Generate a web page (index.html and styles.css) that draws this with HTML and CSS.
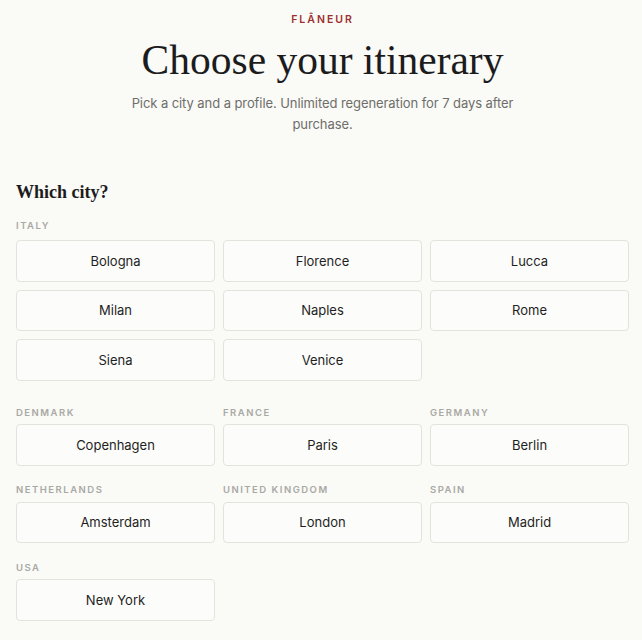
FILE: index.html
```html
<!DOCTYPE html>
<html lang="en">
<head>
<meta charset="utf-8">
<title>Flâneur — Choose your itinerary</title>
<link rel="stylesheet" href="styles.css">
</head>
<body>
<main class="page">
  <header class="hero">
    <div class="brand">FLÂNEUR</div>
    <h1 class="title">Choose your itinerary</h1>
    <p class="lede">Pick a city and a profile. Unlimited regeneration for 7 days after purchase.</p>
  </header>

  <section class="cities">
    <h2 class="section-title">Which city?</h2>

    <div class="country country-wide">
      <div class="country-label">ITALY</div>
      <div class="city-grid">
        <button class="city">Bologna</button>
        <button class="city">Florence</button>
        <button class="city">Lucca</button>
        <button class="city">Milan</button>
        <button class="city">Naples</button>
        <button class="city">Rome</button>
        <button class="city">Siena</button>
        <button class="city">Venice</button>
      </div>
    </div>

    <div class="country-grid">
      <div class="country">
        <div class="country-label">DENMARK</div>
        <button class="city">Copenhagen</button>
      </div>
      <div class="country">
        <div class="country-label">FRANCE</div>
        <button class="city">Paris</button>
      </div>
      <div class="country">
        <div class="country-label">GERMANY</div>
        <button class="city">Berlin</button>
      </div>
      <div class="country">
        <div class="country-label">NETHERLANDS</div>
        <button class="city">Amsterdam</button>
      </div>
      <div class="country">
        <div class="country-label">UNITED KINGDOM</div>
        <button class="city">London</button>
      </div>
      <div class="country">
        <div class="country-label">SPAIN</div>
        <button class="city">Madrid</button>
      </div>
      <div class="country">
        <div class="country-label">USA</div>
        <button class="city">New York</button>
      </div>
    </div>
  </section>
</main>
</body>
</html>
```

FILE: styles.css
```css
html, body {
  margin: 0;
  padding: 0;
  background: #fafaf7;
}

body {
  font-family: Inter, "Noto Sans", "Liberation Sans", sans-serif;
  color: #1f1f1f;
}

.page {
  padding: 13px 13px 20px 16px;
}

.hero {
  text-align: center;
}

.brand {
  font-size: 10.5px;
  font-weight: 600;
  letter-spacing: 2px;
  color: #9e2f2f;
  line-height: 14px;
}

.title {
  font-family: "Liberation Serif", "DejaVu Serif", serif;
  font-weight: 400;
  font-size: 41.5px;
  line-height: 48px;
  margin: 9px 0 0;
  color: #1c1c1c;
}

.lede {
  font-size: 13px;
  line-height: 21px;
  color: #6e6e6a;
  margin: 9px auto 0;
  max-width: 400px;
  letter-spacing: -0.08px;
}

.cities {
  margin-top: 45px;
}

.section-title {
  font-family: "Liberation Serif", "DejaVu Serif", serif;
  font-weight: 700;
  font-size: 18px;
  line-height: 24px;
  margin: 0 0 14px;
  color: #1c1c1c;
}

.country-label {
  font-size: 9.5px;
  font-weight: 600;
  letter-spacing: 1.5px;
  color: #a9a9a3;
  line-height: 14px;
  padding-top: 1px;
  margin-bottom: 7px;
}

.country-grid .country-label {
  padding-top: 3.5px;
  margin-bottom: 4.5px;
}

.country-wide {
  margin-bottom: 21.5px;
}

.city-grid,
.country-grid {
  display: grid;
  grid-template-columns: repeat(3, 1fr);
  column-gap: 8px;
}

.city-grid {
  row-gap: 8px;
}

.country-grid {
  row-gap: 14px;
}

.country {
  display: flex;
  flex-direction: column;
}

.city {
  display: block;
  width: 100%;
  box-sizing: border-box;
  height: 41.5px;
  padding: 0;
  font-family: Inter, "Noto Sans", "Liberation Sans", sans-serif;
  font-size: 13px;
  color: #1f1f1f;
  background: #fcfcfa;
  border: 1px solid #e3e3de;
  border-radius: 4px;
  text-align: center;
  cursor: pointer;
}
```
